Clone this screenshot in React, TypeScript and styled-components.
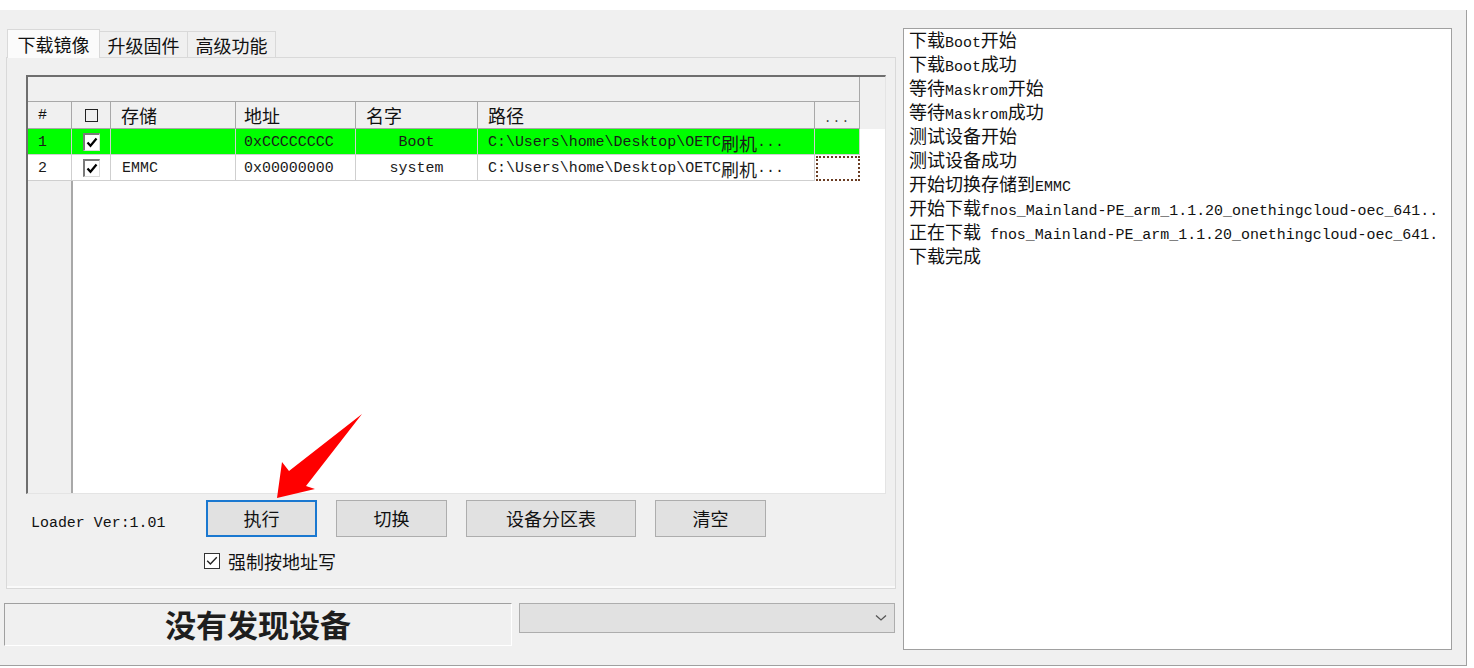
import React from "react";
import styled, { createGlobalStyle } from "styled-components";

const GlobalStyle = createGlobalStyle`
  html, body {
    margin: 0;
    padding: 0;
    background: #fff;
  }
  body {
    font-family: "Noto Sans CJK SC", sans-serif;
    color: #111;
    font-size: 18px;
  }
`;

const Latin = styled.span`
  font-family: "Liberation Mono", "Noto Sans CJK SC", monospace;
  font-size: 0.83em;
`;

// splits ascii runs into a monospace span, like SimSun half-width glyphs
const mixed = (text: string) =>
  text
    .split(/([\x20-\x7e]+)/)
    .filter(Boolean)
    .map((part, i) =>
      /^[\x20-\x7e]+$/.test(part) ? (
        <Latin key={i}>{part}</Latin>
      ) : (
        <React.Fragment key={i}>{part}</React.Fragment>
      )
    );

const COLS = "44px 39px 125px 120px 122px 337px 45px";

const rows = [
  { n: "1", storage: "", addr: "0xCCCCCCCC", name: "Boot", path: "C:\\Users\\home\\Desktop\\OETC刷机...", selected: true },
  { n: "2", storage: "EMMC", addr: "0x00000000", name: "system", path: "C:\\Users\\home\\Desktop\\OETC刷机...", selected: false },
];

const logLines = [
  "下载Boot开始",
  "下载Boot成功",
  "等待Maskrom开始",
  "等待Maskrom成功",
  "测试设备开始",
  "测试设备成功",
  "开始切换存储到EMMC",
  "开始下载fnos_Mainland-PE_arm_1.1.20_onethingcloud-oec_641..",
  "正在下载 fnos_Mainland-PE_arm_1.1.20_onethingcloud-oec_641.",
  "下载完成",
];

const App = () => {
  return (
    <>
      <GlobalStyle />
      <TopStrip />
      <Window>
        <LeftColumn>
          <Tabs>
            <Tab $active $w={93}>下载镜像</Tab>
            <Tab $w={89}>升级固件</Tab>
            <Tab $w={89}>高级功能</Tab>
          </Tabs>
          <Panel>
            <Grid>
              <HeaderBand>
                <GroupHeader />
                <HeaderRow>
                  <HeadCell><Latin>#</Latin></HeadCell>
                  <HeadCell $center><HeadBox /></HeadCell>
                  <HeadCell>存储</HeadCell>
                  <HeadCell $pad={8}>地址</HeadCell>
                  <HeadCell>名字</HeadCell>
                  <HeadCell>路径</HeadCell>
                  <HeadCell $center><Dots>...</Dots></HeadCell>
                </HeaderRow>
              </HeaderBand>
              {rows.map((r) => (
                <Row key={r.n} $selected={r.selected}>
                  <Cell><Latin>{r.n}</Latin></Cell>
                  <Cell $center>
                    <RowCheck>
                      <svg width="12" height="11" viewBox="0 0 12 11">
                        <path d="M1.5 5.5 L4.5 8.8 L10.5 1.5" fill="none" stroke="#000" strokeWidth="2.2" />
                      </svg>
                    </RowCheck>
                  </Cell>
                  <Cell $pad={11}>{mixed(r.storage)}</Cell>
                  <Cell $pad={8}>{mixed(r.addr)}</Cell>
                  <Cell $center>{mixed(r.name)}</Cell>
                  <Cell>{mixed(r.path)}</Cell>
                  <Cell $focus={!r.selected} />
                </Row>
              ))}
            </Grid>

            <Controls>
              <LoaderLabel><Latin>Loader Ver:1.01</Latin></LoaderLabel>
              <ButtonsColumn>
                <ButtonRow>
                  <Button $w={111} $focused>执行</Button>
                  <Button $w={111}>切换</Button>
                  <Button $w={170}>设备分区表</Button>
                  <Button $w={111}>清空</Button>
                </ButtonRow>
                <CheckRow>
                  <CheckBox>
                    <svg width="12" height="10" viewBox="0 0 12 10">
                      <path d="M1.2 4.8 L4.4 8 L10.8 1.2" fill="none" stroke="#222" strokeWidth="1.4" />
                    </svg>
                  </CheckBox>
                  <span>强制按地址写</span>
                </CheckRow>
              </ButtonsColumn>
            </Controls>

            <Arrow width="90" height="90" viewBox="0 0 90 90">
              <polygon points="86,2 30,74 39,77 1,86 6,50 13,59" fill="#ff0000" />
            </Arrow>
          </Panel>

          <StatusRow>
            <StatusBox>没有发现设备</StatusBox>
            <Combo>
              <svg width="12" height="8" viewBox="0 0 12 8">
                <path d="M1 1.5 L6 6 L11 1.5" fill="none" stroke="#555" strokeWidth="1.3" />
              </svg>
            </Combo>
          </StatusRow>
        </LeftColumn>

        <LogBox>
          <LogList>
            {logLines.map((line, i) => (
              <LogLine key={i}>{mixed(line)}</LogLine>
            ))}
          </LogList>
        </LogBox>
      </Window>
    </>
  );
};

export default App;

const TopStrip = styled.div`
  height: 10px;
  background: #fff;
`;

const Window = styled.div`
  display: flex;
  width: 1467px;
  height: 656px;
  box-sizing: border-box;
  background: #f0f0f0;
  border-right: 1px solid #a0a0a0;
  border-bottom: 1px solid #a0a0a0;
`;

const LeftColumn = styled.div`
  display: flex;
  flex-direction: column;
  width: 892px;
  padding: 19px 0 0 4px;
`;

const Tabs = styled.div`
  display: flex;
  align-items: flex-end;
  height: 28px;
  margin-left: 3px;
  position: relative;
  z-index: 1;
`;

const Tab = styled.div<{ $active?: boolean; $w: number }>`
  width: ${(p) => p.$w}px;
  height: ${(p) => (p.$active ? 29 : 26)}px;
  margin-bottom: ${(p) => (p.$active ? -1 : 0)}px;
  margin-left: -1px;
  box-sizing: border-box;
  display: flex;
  align-items: center;
  justify-content: center;
  background: ${(p) => (p.$active ? "#fbfbfb" : "#f0f0f0")};
  border: 1px solid #d9d9d9;
  border-bottom: none;
  font-size: 18px;
  line-height: 1;
  color: #111;
  &:first-child {
    margin-left: 0;
  }
`;

const Panel = styled.div`
  position: relative;
  margin-left: 2px;
  width: 890px;
  height: 532px;
  box-sizing: border-box;
  border: 1px solid #d9d9d9;
  box-shadow: inset 0 -2px 0 #fafafa;
  padding: 17px 9px 0 19px;
`;

const Grid = styled.div`
  width: 860px;
  height: 419px;
  box-sizing: border-box;
  border-top: 2px solid #6e6e6e;
  border-left: 2px solid #6e6e6e;
  border-right: 1px solid #e4e4e4;
  border-bottom: 1px solid #e4e4e4;
  background: linear-gradient(
    to right,
    #f0f0f0 0 43px,
    #a8a8a8 43px 45px,
    #fff 45px
  );
  overflow: hidden;
`;

const HeaderBand = styled.div`
  background: #f0f0f0;
`;

const GroupHeader = styled.div`
  width: 832px;
  height: 25px;
  box-sizing: border-box;
  border-right: 1px solid #a8a8a8;
  border-bottom: 1px solid #a8a8a8;
`;

const HeaderRow = styled.div`
  display: grid;
  grid-template-columns: ${COLS};
  height: 27px;
`;

const HeadCell = styled.div<{ $center?: boolean; $pad?: number }>`
  display: flex;
  align-items: center;
  justify-content: ${(p) => (p.$center ? "center" : "flex-start")};
  padding-left: ${(p) => (p.$center ? 0 : p.$pad ?? 10)}px;
  box-sizing: border-box;
  border-right: 1px solid #a8a8a8;
  border-bottom: 1px solid #a8a8a8;
  font-size: 18px;
  line-height: 1;
  color: #111;
`;

const HeadBox = styled.span`
  width: 13px;
  height: 13px;
  box-sizing: border-box;
  border: 1.5px solid #222;
`;

const Dots = styled.span`
  font-family: "Liberation Mono", monospace;
  font-size: 13px;
  color: #444;
  margin-top: 6px;
  letter-spacing: 1px;
`;

const Row = styled.div<{ $selected?: boolean }>`
  display: grid;
  grid-template-columns: ${COLS};
  width: 832px;
  height: 26px;
  background: ${(p) => (p.$selected ? "#00ff00" : "#fff")};
`;

const Cell = styled.div<{ $center?: boolean; $pad?: number; $focus?: boolean }>`
  display: flex;
  align-items: center;
  justify-content: ${(p) => (p.$center ? "center" : "flex-start")};
  padding-left: ${(p) => (p.$center ? 0 : p.$pad ?? 10)}px;
  padding-top: 2px;
  box-sizing: border-box;
  border-right: 1px solid #cfcfcf;
  border-bottom: 1px solid #cfcfcf;
  font-size: 18px;
  line-height: 1;
  white-space: nowrap;
  overflow: hidden;
  color: #1a1a1a;
  ${(p) =>
    p.$focus &&
    `
    border: 2px dotted #6a3c22;
    margin: 1px 0 0 1px;
  `}
`;

const RowCheck = styled.span`
  width: 17px;
  height: 18px;
  box-sizing: border-box;
  background: #fff;
  border-top: 2px solid #7a7a7a;
  border-left: 2px solid #7a7a7a;
  border-right: 1px solid #dcdcdc;
  border-bottom: 1px solid #dcdcdc;
  display: flex;
  align-items: center;
  justify-content: center;
  margin-top: -2px;
`;

const Controls = styled.div`
  display: flex;
  padding-top: 6px;
`;

const LoaderLabel = styled.div`
  width: 180px;
  padding-left: 5px;
  box-sizing: border-box;
  height: 37px;
  margin-top: 4px;
  display: flex;
  align-items: center;
  font-size: 18px;
  color: #111;
`;

const ButtonsColumn = styled.div`
  display: flex;
  flex-direction: column;
`;

const ButtonRow = styled.div`
  display: flex;
  gap: 19px;
`;

const Button = styled.button<{ $w: number; $focused?: boolean }>`
  width: ${(p) => p.$w}px;
  height: 37px;
  box-sizing: border-box;
  background: #e1e1e1;
  border: ${(p) => (p.$focused ? "2px solid #1a78d0" : "1px solid #adadad")};
  font-family: "Noto Sans CJK SC", sans-serif;
  font-size: 18px;
  line-height: 1;
  color: #111;
  padding: 0 0 2px;
  margin: 0;
`;

const CheckRow = styled.div`
  display: flex;
  align-items: center;
  margin: 15px 0 0 -2px;
  font-size: 18px;
  line-height: 1;
  color: #111;
`;

const CheckBox = styled.span`
  width: 16px;
  height: 16px;
  box-sizing: border-box;
  border: 1px solid #333;
  background: #fff;
  margin-right: 8px;
  display: flex;
  align-items: center;
  justify-content: center;
`;

const Arrow = styled.svg`
  position: absolute;
  left: 269px;
  top: 354px;
`;

const StatusRow = styled.div`
  display: flex;
  gap: 7px;
  margin-top: 14px;
`;

const StatusBox = styled.div`
  width: 508px;
  height: 43px;
  box-sizing: border-box;
  border-top: 1px solid #a0a0a0;
  border-left: 1px solid #a0a0a0;
  border-right: 1px solid #fff;
  border-bottom: 1px solid #fff;
  display: flex;
  align-items: center;
  justify-content: center;
  font-size: 31px;
  font-weight: 700;
  color: #1e1e1e;
  line-height: 1;
  padding-bottom: 2px;
`;

const Combo = styled.div`
  width: 376px;
  height: 30px;
  box-sizing: border-box;
  background: #e1e1e1;
  border: 1px solid #adadad;
  display: flex;
  align-items: center;
  justify-content: flex-end;
  padding-right: 7px;
`;

const LogBox = styled.div`
  margin: 18px 0 0 7px;
  width: 549px;
  height: 622px;
  box-sizing: border-box;
  border: 1px solid #a0a0a0;
  background: #fff;
  padding: 0 0 0 5px;
`;

const LogList = styled.div`
  margin-top: -2px;
`;

const LogLine = styled.div`
  height: 24px;
  line-height: 24px;
  font-size: 18px;
  white-space: nowrap;
  overflow: hidden;
  color: #111;
`;
